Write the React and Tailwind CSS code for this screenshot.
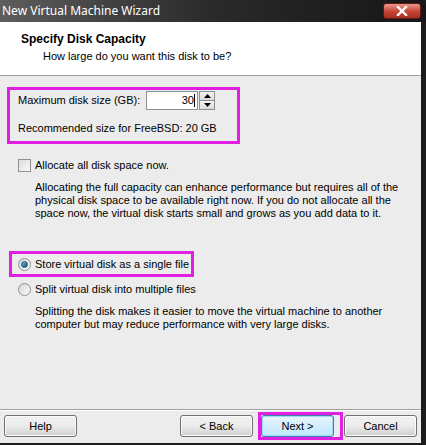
import React from "react";

const font = { fontFamily: '"Liberation Sans", Arial, sans-serif' };

function XpButton({ children, primary }) {
  return (
    <button
      className={
        "h-[22px] w-[73px] rounded-[3px] border text-[11px] text-black flex items-center justify-center " +
        (primary
          ? "border-[#3c7fb1] bg-gradient-to-b from-[#eaf6fd] to-[#bee6fd] shadow-[inset_0_0_0_1px_#9fd6f5]"
          : "border-[#707070] bg-gradient-to-b from-[#f2f2f2] via-[#ebebeb] to-[#cfcfcf] shadow-[inset_0_0_0_1px_#fcfcfc]")
      }
    >
      {children}
    </button>
  );
}

function Radio({ checked }) {
  return (
    <span className="w-[13px] h-[13px] rounded-full border border-[#8e8f8f] bg-gradient-to-br from-[#d8d8d8] to-[#fafafa] flex items-center justify-center shrink-0">
      {checked && (
        <span className="w-[7px] h-[7px] rounded-full bg-gradient-to-br from-[#7ab6d8] to-[#0f4e74] border border-[#1c5d85]" />
      )}
    </span>
  );
}

export default function App() {
  return (
    <div className="w-[426px] h-[445px] bg-[#1c1c1c] pr-[5px] pb-[2px] flex flex-col" style={font}>
      {/* title bar */}
      <div className="h-[22px] flex items-center justify-between pl-[2px] bg-gradient-to-r from-[#5e5e5e] via-[#2a2a2a] to-[#161616] -mr-[5px] rounded-tr-[6px]">
        <span className="text-white text-[12px]" style={{ fontFamily: '"Noto Sans", "DejaVu Sans", sans-serif' }}>
          New Virtual Machine Wizard
        </span>
        <div className="mr-[5px] w-[38px] h-[16px] rounded-[3px] border border-[#5a1a14] bg-gradient-to-b from-[#e99a8c] via-[#c8483a] to-[#a82c20] flex items-center justify-center">
          <svg width="12" height="10" viewBox="0 0 12 10">
            <path d="M2 1 L10 9 M10 1 L2 9" stroke="#fff" strokeWidth="2.4" strokeLinecap="square" />
          </svg>
        </div>
      </div>

      <div className="flex-1 flex flex-col bg-[#ececec]">
        {/* header */}
        <div className="h-[54px] bg-white border-b border-[#a0a0a0] flex flex-col pl-[21px] pt-[10px]">
          <div className="text-[12px] font-bold text-black leading-[14px]">Specify Disk Capacity</div>
          <div className="text-[11px] text-black ml-[22px] mt-[4px] leading-[13px]">How large do you want this disk to be?</div>
        </div>

        {/* body */}
        <div className="flex-1 flex flex-col text-[11px] text-black leading-[13px]">
          <div className="mt-[11px] ml-[7px] w-[233px] h-[57px] border-[3px] border-[#e21fe0] pl-[8px] pt-[1px] flex flex-col">
            <div className="flex items-center h-[19px]">
              <span className="w-[128px]">Maximum disk size (GB):</span>
              <div className="w-[52px] h-[19px] border border-[#8f8f8f] bg-white flex items-center justify-end pr-[2px]">
                <span>30</span>
                <span className="w-[1px] h-[13px] bg-black" />
              </div>
              <div className="ml-[1px] flex flex-col h-[19px] w-[16px]">
                <div className="flex-1 border border-[#8f8f8f] bg-gradient-to-b from-[#f4f4f4] to-[#dcdcdc] flex items-center justify-center">
                  <svg width="7" height="4" viewBox="0 0 7 4"><path d="M3.5 0 L7 4 L0 4 Z" fill="#000" /></svg>
                </div>
                <div className="flex-1 border border-[#8f8f8f] border-t-0 bg-gradient-to-b from-[#f4f4f4] to-[#dcdcdc] flex items-center justify-center">
                  <svg width="7" height="4" viewBox="0 0 7 4"><path d="M0 0 L7 0 L3.5 4 Z" fill="#000" /></svg>
                </div>
              </div>
            </div>
            <div className="mt-[12px]">Recommended size for FreeBSD: 20 GB</div>
          </div>

          <div className="mt-[15px] ml-[18px] flex items-center gap-[4px]">
            <span className="w-[13px] h-[13px] border border-[#8e8f8f] bg-gradient-to-br from-[#dcdcdc] to-[#f8f8f8]" />
            <span>Allocate all disk space now.</span>
          </div>
          <div className="ml-[35px] mt-[9px] w-[370px]">
            Allocating the full capacity can enhance performance but requires all of the physical disk space to be available right now. If you do not allocate all the space now, the virtual disk starts small and grows as you add data to it.
          </div>

          <div className="mt-[31px] ml-[9px] w-[185px] h-[26px] border-[3px] border-[#e21fe0] pl-[6px] flex items-center gap-[4px]">
            <Radio checked />
            <span>Store virtual disk as a single file</span>
          </div>
          <div className="mt-[6px] ml-[18px] flex items-center gap-[4px]">
            <Radio />
            <span>Split virtual disk into multiple files</span>
          </div>
          <div className="ml-[35px] mt-[9px] w-[370px]">
            Splitting the disk makes it easier to move the virtual machine to another computer but may reduce performance with very large disks.
          </div>
        </div>

        {/* footer */}
        <div className="border-t border-[#a0a0a0] shadow-[inset_0_1px_0_#ffffff] h-[34px] flex items-start pt-[2px] pl-[4px]">
          <div className="mt-[3px]">
            <XpButton>Help</XpButton>
          </div>
          <div className="ml-auto mt-[3px]">
            <XpButton>&lt; Back</XpButton>
          </div>
          <div className="ml-[5px] border-[3px] border-[#e21fe0] pr-[6px]">
            <XpButton primary>Next &gt;</XpButton>
          </div>
          <div className="ml-[1px] mt-[3px] mr-[4px]">
            <XpButton>Cancel</XpButton>
          </div>
        </div>
      </div>
    </div>
  );
}
